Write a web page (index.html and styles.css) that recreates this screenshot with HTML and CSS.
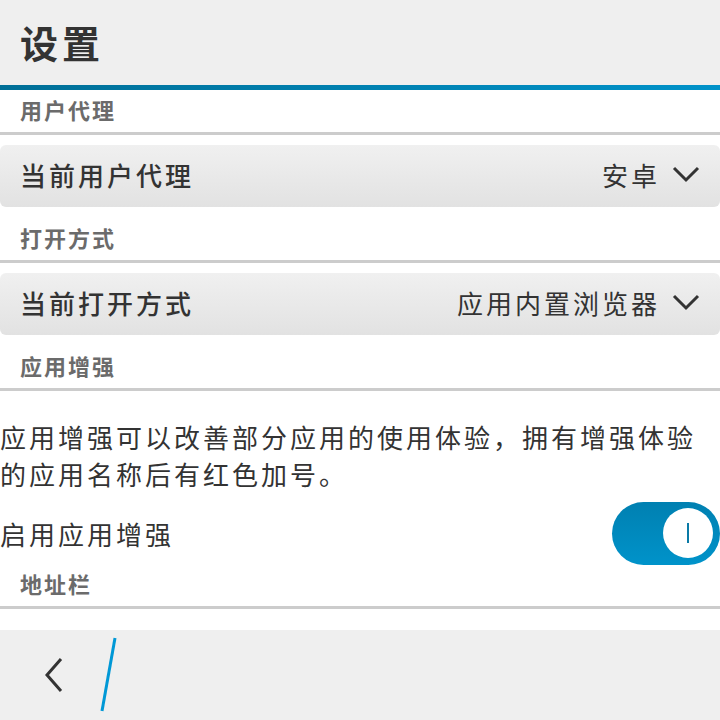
FILE: index.html
```html
<!DOCTYPE html>
<html lang="zh-CN">

<head>
    <meta charset="UTF-8" />
    <meta name="viewport" content="width=device-width, initial-scale=1.0" />
    <title>设置</title>
    <link rel="stylesheet" href="styles.css">
</head>

<body>
    <header class="topbar">
        <h1 class="title">设置</h1>
    </header>
    <div class="accent"></div>

    <main class="content">
        <div class="group-title">用户代理</div>
        <div class="select-row">
            <span class="select-label">当前用户代理</span>
            <span class="select-value">
                安卓
                <svg class="chevron" width="28" height="18" viewBox="0 0 28 18">
                    <path d="M2 3 L14 15 L26 3" />
                </svg>
            </span>
        </div>

        <div class="group-title">打开方式</div>
        <div class="select-row">
            <span class="select-label">当前打开方式</span>
            <span class="select-value">
                应用内置浏览器
                <svg class="chevron" width="28" height="18" viewBox="0 0 28 18">
                    <path d="M2 3 L14 15 L26 3" />
                </svg>
            </span>
        </div>

        <div class="group-title">应用增强</div>
        <p class="desc">应用增强可以改善部分应用的使用体验，拥有增强体验的应用名称后有红色加号。</p>
        <div class="switch-row">
            <span>启用应用增强</span>
            <div class="switch on">
                <div class="knob"><span class="knob-mark"></span></div>
            </div>
        </div>

        <div class="group-title">地址栏</div>
    </main>

    <footer class="bottombar">
        <svg class="back" width="24" height="40" viewBox="0 0 24 40">
            <path d="M19 4 L5 20 L19 36" />
        </svg>
        <svg class="slash" width="20" height="76" viewBox="0 0 20 76">
            <path d="M15 1 L2 74" />
        </svg>
    </footer>
</body>

</html>
```

FILE: styles.css
```css
* {
    margin: 0;
    padding: 0;
    box-sizing: border-box;
}

body {
    width: 720px;
    height: 720px;
    display: flex;
    flex-direction: column;
    background: #fff;
    color: #333;
    font-family: "Noto Sans CJK SC", "Noto Sans", sans-serif;
    overflow: hidden;
}

.topbar {
    height: 85px;
    background: #efefef;
    display: flex;
    align-items: center;
    padding-left: 20px;
    padding-bottom: 2px;
}

.title {
    font-size: 38px;
    font-weight: bold;
    letter-spacing: 4px;
    color: #333;
}

.accent {
    height: 5px;
    background: linear-gradient(to right, #006f97, #0092c9);
}

.content {
    flex: 1;
    overflow: hidden;
}

.group-title {
    height: 45px;
    display: flex;
    align-items: center;
    padding-left: 20px;
    padding-bottom: 4px;
    border-bottom: 3px solid #cccccc;
    font-size: 22px;
    font-weight: bold;
    letter-spacing: 2px;
    color: #6b6b6b;
}

.select-row {
    height: 62px;
    margin: 10px 0 11px;
    padding: 0 20px 4px;
    display: flex;
    align-items: center;
    justify-content: space-between;
    background: linear-gradient(to bottom, #f0f0f0, #e2e2e2);
    border-radius: 6px;
    font-size: 26px;
    letter-spacing: 3px;
}

.select-label {
    font-weight: 500;
    color: #333;
}

.select-value {
    display: flex;
    align-items: center;
    gap: 12px;
    color: #333;
}

.chevron path,
.back path {
    fill: none;
    stroke: #333;
    stroke-width: 3;
}

.desc {
    margin-top: 27px;
    font-size: 26px;
    line-height: 37px;
    letter-spacing: 3px;
}

.switch-row {
    margin-top: 10px;
    height: 62px;
    display: flex;
    align-items: center;
    justify-content: space-between;
    font-size: 26px;
    letter-spacing: 3px;
}

.switch {
    width: 108px;
    height: 63px;
    border-radius: 32px;
    background: linear-gradient(to bottom, #0080b1, #0093ca);
    display: flex;
    align-items: center;
    justify-content: flex-end;
    padding-right: 7px;
}

.knob {
    width: 50px;
    height: 50px;
    border-radius: 50%;
    background: #fff;
    display: flex;
    align-items: center;
    justify-content: center;
}

.knob-mark {
    width: 2px;
    height: 20px;
    background: #0a7aa6;
}

.bottombar {
    height: 90px;
    background: #efefef;
    display: flex;
    align-items: center;
    padding-left: 42px;
    gap: 34px;
}

.slash path {
    fill: none;
    stroke: #0098d6;
    stroke-width: 3;
}
```
